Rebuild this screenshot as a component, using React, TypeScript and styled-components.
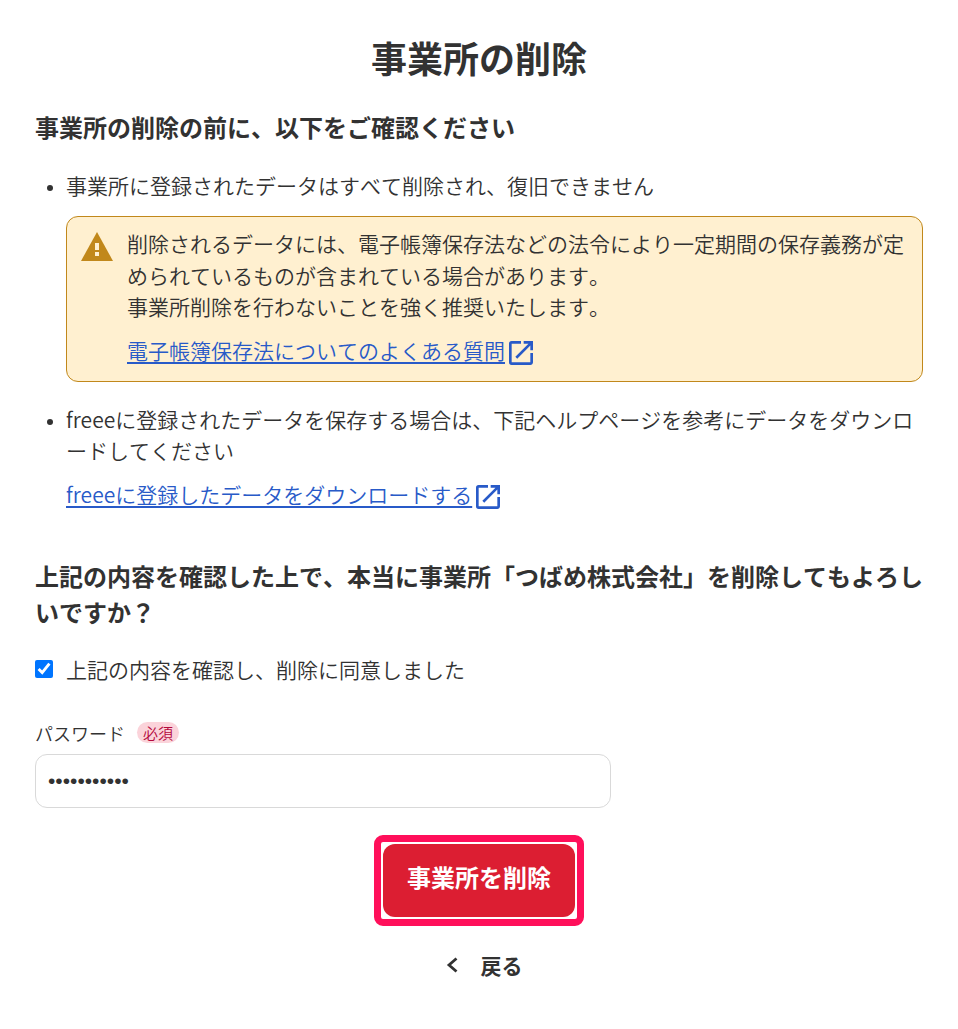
import React from "react";
import styled, { createGlobalStyle } from "styled-components";

const Global = createGlobalStyle`
  html, body { margin: 0; padding: 0; background: #fff; }
  body {
    font-family: "Noto Sans CJK JP", "Noto Sans", sans-serif;
    font-kerning: none;
    color: #323232;
    font-size: 21px;
    line-height: 31.5px;
    font-weight: 350;
  }
  * { box-sizing: border-box; }
`;

const Page = styled.main`
  width: 958px;
  height: 1029px;
  padding: 32px 35px 0;
  overflow: hidden;
`;
const Title = styled.h1`
  margin: 0 0 27px;
  font-size: 36px;
  line-height: 50px;
  font-weight: 700;
  text-align: center;
`;
const Lead = styled.h2`
  margin: 0 0 25px;
  font-size: 24px;
  line-height: 36px;
  font-weight: 700;
`;
const List = styled.ul`
  margin: 0;
  padding: 0 0 0 31px;
  list-style: disc;
`;
const Item = styled.li<{ $gap?: number }>`
  margin-bottom: ${(p) => p.$gap ?? 0}px;
  &::marker {
    font-size: 21px;
    font-family: "Liberation Sans", sans-serif;
  }
`;
const Notice = styled.div`
  display: flex;
  gap: 14px;
  margin-top: 14.5px;
  padding: 11px 13px 15px 14px;
  background: #fff0d0;
  border: 1px solid #c1881b;
  border-radius: 12px;
`;
const NoticeBody = styled.div`
  flex: 1;
`;
const LinkRow = styled.div<{ $top: number }>`
  margin-top: ${(p) => p.$top}px;
  display: flex;
  align-items: center;
`;
const TextLink = styled.a`
  color: #285ac8;
  text-decoration: underline;
  text-decoration-thickness: 2px;
  text-underline-offset: 3px;
`;
const Ext = styled.svg`
  width: 24px;
  height: 24px;
  flex: none;
  margin: 6px 0 0 4px;
  fill: #285ac8;
`;
const WarningIcon = styled.svg`
  width: 32px;
  height: 29px;
  flex: none;
  margin-top: 4px;
`;
const Confirm = styled.h2`
  margin: 47.5px 0 0;
  font-size: 24px;
  line-height: 36px;
  font-weight: 700;
`;
const Agree = styled.label`
  display: flex;
  align-items: center;
  gap: 13px;
  margin-top: 24px;
`;
const Check = styled.input`
  width: 18px;
  height: 18px;
  margin: 0;
  accent-color: #0075ff;
`;
const FieldLabel = styled.div`
  display: flex;
  align-items: center;
  gap: 12px;
  margin-top: 33.5px;
  font-size: 18px;
  line-height: 28px;
`;
const Required = styled.span`
  display: inline-block;
  padding: 0 6px;
  height: 21px;
  line-height: 21px;
  font-size: 15px;
  border-radius: 11px;
  color: #b4083c;
  background: #fbd3da;
`;
const Password = styled.input`
  display: block;
  width: 576px;
  height: 54px;
  margin-top: 7px;
  padding: 0 12px;
  border: 1px solid #d9d9d9;
  border-radius: 12px;
  font-family: "Liberation Sans", sans-serif;
  font-size: 21px;
  color: #323232;
  background: #fff;
  outline: none;
`;
const Actions = styled.div`
  display: flex;
  flex-direction: column;
  align-items: center;
  margin-top: 36px;
`;
const Danger = styled.button`
  position: relative;
  width: 192px;
  height: 73px;
  padding: 0 0 6px;
  border: none;
  border-radius: 12px;
  background: #dc1e32;
  color: #fff;
  font: 700 24px/36px "Noto Sans CJK JP", sans-serif;
  font-kerning: none;
  &::after {
    content: "";
    position: absolute;
    inset: -9px;
    border: 7px solid #ff0f5a;
    border-radius: 9px;
  }
`;
const Back = styled.a`
  display: flex;
  align-items: center;
  gap: 21px;
  margin-top: 33px;
  margin-left: 8px;
  font-weight: 700;
  color: #323232;
`;

const ExternalIcon = () => (
  <Ext viewBox="3 3 18 18">
    <path d="M19 19H5V5h7V3H5a2 2 0 0 0-2 2v14a2 2 0 0 0 2 2h14c1.1 0 2-.9 2-2v-7h-2v7zM14 3v2h3.59l-9.83 9.83 1.41 1.41L19 6.41V10h2V3h-7z" />
  </Ext>
);

const Warning = () => (
  <WarningIcon viewBox="0 0 32 29">
    <path d="M16 0 L32 29 H0 Z" fill="#c1881b" />
    <rect x="14" y="11" width="4" height="7" fill="#fff0d0" />
    <rect x="14" y="20" width="4" height="4" fill="#fff0d0" />
  </WarningIcon>
);

export default function App() {
  return (
    <Page>
      <Global />
      <Title>事業所の削除</Title>
      <Lead>事業所の削除の前に、以下をご確認ください</Lead>
      <List>
        <Item $gap={21.5}>
          事業所に登録されたデータはすべて削除され、復旧できません
          <Notice>
            <Warning />
            <NoticeBody>
              削除されるデータには、電子帳簿保存法などの法令により一定期間の保存義務が定められているものが含まれている場合があります。
              <br />
              事業所削除を行わないことを強く推奨いたします。
              <LinkRow $top={12}>
                <TextLink>電子帳簿保存法についてのよくある質問</TextLink>
                <ExternalIcon />
              </LinkRow>
            </NoticeBody>
          </Notice>
        </Item>
        <Item>
          freeeに登録されたデータを保存する場合は、下記ヘルプページを参考にデータをダウンロードしてください
          <LinkRow $top={12}>
            <TextLink>freeeに登録したデータをダウンロードする</TextLink>
            <ExternalIcon />
          </LinkRow>
        </Item>
      </List>
      <Confirm>上記の内容を確認した上で、本当に事業所「つばめ株式会社」を削除してもよろしいですか？</Confirm>
      <Agree>
        <Check type="checkbox" defaultChecked />
        上記の内容を確認し、削除に同意しました
      </Agree>
      <FieldLabel>
        パスワード<Required>必須</Required>
      </FieldLabel>
      <Password type="password" defaultValue="aaaaaaaaaaa" />
      <Actions>
        <Danger>事業所を削除</Danger>
        <Back>
          <svg width="16" height="18" viewBox="0 0 16 18" fill="none" stroke="#323232" strokeWidth="2.8">
            <path d="M12.5 2.5 L5 9 L12.5 15.5" />
          </svg>
          戻る
        </Back>
      </Actions>
    </Page>
  );
}
